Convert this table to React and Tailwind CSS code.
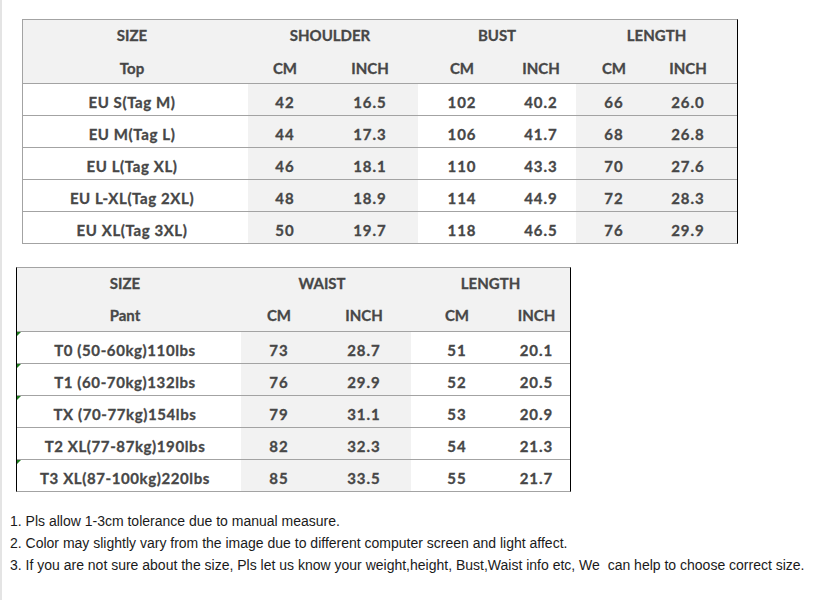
const tops = [
  ["EU S(Tag M)", "42", "16.5", "102", "40.2", "66", "26.0"],
  ["EU M(Tag L)", "44", "17.3", "106", "41.7", "68", "26.8"],
  ["EU L(Tag XL)", "46", "18.1", "110", "43.3", "70", "27.6"],
  ["EU L-XL(Tag 2XL)", "48", "18.9", "114", "44.9", "72", "28.3"],
  ["EU XL(Tag 3XL)", "50", "19.7", "118", "46.5", "76", "29.9"],
];

const pants = [
  ["T0 (50-60kg)110lbs", "73", "28.7", "51", "20.1", true],
  ["T1 (60-70kg)132lbs", "76", "29.9", "52", "20.5", true],
  ["TX (70-77kg)154lbs", "79", "31.1", "53", "20.9", true],
  ["T2 XL(77-87kg)190lbs", "82", "32.3", "54", "21.3", false],
  ["T3 XL(87-100kg)220lbs", "85", "33.5", "55", "21.7", true],
];

const notes = [
  "1. Pls allow 1-3cm tolerance due to manual measure.",
  "2. Color may slightly vary from the image due to different computer screen and light affect.",
  "3. If you are not sure about the size, Pls let us know your weight,height, Bust,Waist info etc, We\u00a0 can help to choose correct size.",
];

const topCols = "grid grid-cols-[225px_74px_96px_88px_70px_76px_72px_13px]";
const pantCols = "grid grid-cols-[224px_76px_94px_92px_67px]";

const Cell = ({ children, className = "" }) => (
  <div className={"flex items-center justify-center " + className}>{children}</div>
);

const Num = ({ children, className = "" }) => (
  <Cell className={"tracking-[1px] " + className}>{children}</Cell>
);

export default function App() {
  return (
    <div className="w-[820px] h-[600px] bg-white border-l-2 border-[#e4e4e4] text-[#474747] font-['Lato',sans-serif] font-bold text-[15px] [-webkit-text-stroke:0.3px] overflow-hidden">
      {/* Top size table */}
      <div className="ml-[20px] mt-[19px] w-[716px] border-t border-b border-l border-[#a3a3a3] border-r border-r-black">
        <div className={topCols + " bg-[#f2f2f2] h-[32px] pb-[2px]"}>
          <Cell className="pr-[7px]">SIZE</Cell>
          <Cell className="col-span-2 pr-[6px]">SHOULDER</Cell>
          <Cell className="col-span-2">BUST</Cell>
          <Cell className="col-span-3">LENGTH</Cell>
        </div>
        <div className={topCols + " bg-[#f2f2f2] h-[31px] pt-[1px]"}>
          <Cell className="pr-[7px]">Top</Cell>
          <Cell>CM</Cell>
          <Cell>INCH</Cell>
          <Cell>CM</Cell>
          <Cell>INCH</Cell>
          <Cell>CM</Cell>
          <Cell>INCH</Cell>
          <div />
        </div>
        {tops.map((r) => (
          <div key={r[0]} className={topCols + " h-[32px] border-t border-[#a3a3a3]"}>
            <Cell className="bg-white pt-[5px] pr-[7px] tracking-[0.6px]">{r[0]}</Cell>
            <Num className="bg-[#f2f2f2] pt-[5px]">{r[1]}</Num>
            <Num className="bg-[#f2f2f2] pt-[5px]">{r[2]}</Num>
            <Num className="bg-white pt-[5px]">{r[3]}</Num>
            <Num className="bg-white pt-[5px]">{r[4]}</Num>
            <Num className="bg-[#f2f2f2] pt-[5px]">{r[5]}</Num>
            <Num className="bg-[#f2f2f2] pt-[5px]">{r[6]}</Num>
            <div className="bg-[#f2f2f2]" />
          </div>
        ))}
      </div>

      {/* Pant size table */}
      <div className="ml-[14px] mt-[23px] w-[555px] border-t border-b border-[#a3a3a3] border-l border-l-black border-r border-r-black">
        <div className={pantCols + " bg-[#f2f2f2] h-[32px] pb-[2px]"}>
          <Cell className="pr-[8px]">SIZE</Cell>
          <Cell className="col-span-2 pr-[8px]">WAIST</Cell>
          <Cell className="col-span-2">LENGTH</Cell>
        </div>
        <div className={pantCols + " bg-[#f2f2f2] h-[31px]"}>
          <Cell className="pr-[8px]">Pant</Cell>
          <Cell>CM</Cell>
          <Cell>INCH</Cell>
          <Cell>CM</Cell>
          <Cell>INCH</Cell>
        </div>
        {pants.map((r) => (
          <div key={r[0]} className={pantCols + " h-[32px] border-t border-[#a3a3a3]"}>
            <Cell className="relative bg-white pt-[5px] pr-[8px] tracking-[0.6px]">
              {r[5] && (
                <span className="absolute left-0 top-0 w-0 h-0 border-t-[4px] border-r-[4px] border-t-[#1e7b1e] border-r-transparent" />
              )}
              {r[0]}
            </Cell>
            <Num className="bg-[#f2f2f2] pt-[5px]">{r[1]}</Num>
            <Num className="bg-[#f2f2f2] pt-[5px]">{r[2]}</Num>
            <Num className="bg-white pt-[5px]">{r[3]}</Num>
            <Num className="bg-white pt-[5px]">{r[4]}</Num>
          </div>
        ))}
      </div>

      {/* Notes */}
      <div className="ml-[8px] mt-[18px] font-normal text-[14px] leading-[22px] text-[#1a1a1a] [-webkit-text-stroke:0px] font-['Liberation_Sans',sans-serif]">
        {notes.map((n) => (
          <div key={n}>{n}</div>
        ))}
      </div>
    </div>
  );
}
